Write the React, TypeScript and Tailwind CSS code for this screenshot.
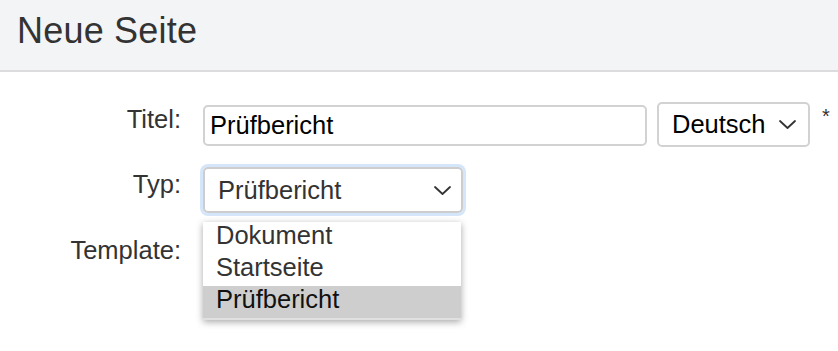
function Chevron({ className }: { className?: string }) {
  return (
    <svg className={className} width="17" height="9" viewBox="0 0 17 9" fill="none">
      <polyline points="1,1 8.5,8 16,1" stroke="#333" strokeWidth="1.8" strokeLinecap="round" strokeLinejoin="round" />
    </svg>
  );
}

const options = ['Dokument', 'Startseite', 'Prüfbericht'];

export default function App() {
  return (
    <div className="h-[351px] w-[838px] overflow-hidden bg-white font-['Liberation_Sans',Arial,sans-serif]">
      <header className="h-[72px] border-b-2 border-[#dcdcdf] bg-[#f3f4f6] pl-[17px] pt-[13px]">
        <h1 className="text-[36px] leading-[36px] tracking-[0.2px] text-[#333]">Neue Seite</h1>
      </header>

      <div className="pt-[30px] text-[25.5px]">
        <div className="flex items-start">
          <label className="mt-[3px] w-[181px] text-right leading-[29px] text-[#333]">Titel:</label>
          <div className="ml-[22px] mt-[3px] flex h-[41px] w-[444px] items-center rounded-[5px] border-2 border-[#d2d2d2] pl-[5px] text-black">
            Prüfbericht
          </div>
          <div className="ml-[10px] flex h-[45px] w-[153px] items-center justify-between rounded-[5px] border-2 border-[#d2d2d2] pl-[13px] pr-[12px] text-black">
            <span>Deutsch</span>
            <Chevron />
          </div>
          <span className="ml-[12px] mt-[4px] text-[20px] leading-[20px] text-[#333]">*</span>
        </div>

        <div className="relative mt-[20px] flex items-start">
          <label className="mt-[3px] w-[181px] text-right leading-[29px] text-[#333]">Typ:</label>
          <div className="ml-[22px] flex h-[46px] w-[260px] items-center justify-between rounded-[5px] border-2 border-[#cdcdcd] pl-[13px] pr-[10px] text-[#333] shadow-[0_0_0_3px_#d5e6fb]">
            <span>Prüfbericht</span>
            <Chevron />
          </div>

          <ul className="absolute left-[203px] top-[55px] w-[258px] border-b-2 border-[#e0e0e0] bg-white shadow-[0_2px_7px_rgba(0,0,0,0.35)]">
            {options.map((o) => (
              <li
                key={o}
                className={
                  o === 'Prüfbericht'
                    ? 'h-[32px] bg-[#cecece] pl-[13px] leading-[27px] text-[#111]'
                    : 'h-[32px] pl-[13px] leading-[27px] text-[#333]'
                }
              >
                {o}
              </li>
            ))}
          </ul>
        </div>

        <div className="mt-[23px] flex items-start">
          <label className="w-[181px] text-right leading-[29px] text-[#333]">Template:</label>
        </div>
      </div>
    </div>
  );
}
